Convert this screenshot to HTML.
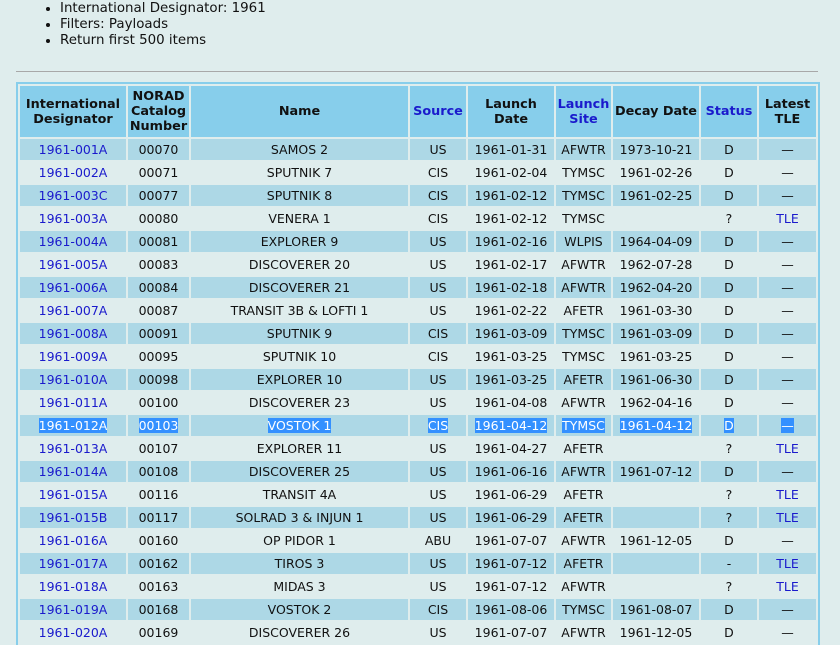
<!DOCTYPE html>
<html><head><style>
body{margin:0;background:#dfeded;font-family:"DejaVu Sans",Verdana,sans-serif;font-size:13px;color:#111;width:840px;height:625px;overflow:hidden;position:relative}
ul{position:absolute;left:0;top:1px;margin:0;padding:0 0 0 60px;line-height:16px;font-size:13.4px}
ul li{margin:0}
hr{position:absolute;left:16px;top:71px;width:802px;margin:0;border:0;border-top:1px solid #a8a8a8;height:0}
table{position:absolute;left:16px;top:82px;border:2px solid #87ceeb;border-bottom:0;border-spacing:2px;border-collapse:separate;table-layout:fixed;width:800px}
td,th{text-align:center;padding:0;height:21px;font-size:12.5px;white-space:nowrap;overflow:hidden}
th{background:#87ceeb;font-weight:bold;height:51px;line-height:15px;font-size:12.8px}
tr.o td{background:#add8e6}
tr.e td{background:#dfeded}
a,.l{color:#1a1acc;text-decoration:none}
.s{background:#3390ff;color:#fff}
</style></head><body>
<ul><li>International Designator: 1961</li><li>Filters: Payloads</li><li>Return first 500 items</li></ul>
<hr>
<table>
<colgroup><col style="width:106px"><col style="width:61px"><col style="width:217px"><col style="width:56px"><col style="width:86px"><col style="width:55px"><col style="width:86px"><col style="width:56px"><col style="width:57px"></colgroup>
<tr><th>International<br>Designator</th><th>NORAD<br>Catalog<br>Number</th><th>Name</th><th class="l">Source</th><th>Launch<br>Date</th><th class="l">Launch<br>Site</th><th>Decay Date</th><th class="l">Status</th><th>Latest<br>TLE</th></tr>
<tr class="o"><td><a>1961-001A</a></td><td>00070</td><td>SAMOS 2</td><td>US</td><td>1961-01-31</td><td>AFWTR</td><td>1973-10-21</td><td>D</td><td>—</td></tr>
<tr class="e"><td><a>1961-002A</a></td><td>00071</td><td>SPUTNIK 7</td><td>CIS</td><td>1961-02-04</td><td>TYMSC</td><td>1961-02-26</td><td>D</td><td>—</td></tr>
<tr class="o"><td><a>1961-003C</a></td><td>00077</td><td>SPUTNIK 8</td><td>CIS</td><td>1961-02-12</td><td>TYMSC</td><td>1961-02-25</td><td>D</td><td>—</td></tr>
<tr class="e"><td><a>1961-003A</a></td><td>00080</td><td>VENERA 1</td><td>CIS</td><td>1961-02-12</td><td>TYMSC</td><td></td><td>?</td><td><a>TLE</a></td></tr>
<tr class="o"><td><a>1961-004A</a></td><td>00081</td><td>EXPLORER 9</td><td>US</td><td>1961-02-16</td><td>WLPIS</td><td>1964-04-09</td><td>D</td><td>—</td></tr>
<tr class="e"><td><a>1961-005A</a></td><td>00083</td><td>DISCOVERER 20</td><td>US</td><td>1961-02-17</td><td>AFWTR</td><td>1962-07-28</td><td>D</td><td>—</td></tr>
<tr class="o"><td><a>1961-006A</a></td><td>00084</td><td>DISCOVERER 21</td><td>US</td><td>1961-02-18</td><td>AFWTR</td><td>1962-04-20</td><td>D</td><td>—</td></tr>
<tr class="e"><td><a>1961-007A</a></td><td>00087</td><td>TRANSIT 3B &amp; LOFTI 1</td><td>US</td><td>1961-02-22</td><td>AFETR</td><td>1961-03-30</td><td>D</td><td>—</td></tr>
<tr class="o"><td><a>1961-008A</a></td><td>00091</td><td>SPUTNIK 9</td><td>CIS</td><td>1961-03-09</td><td>TYMSC</td><td>1961-03-09</td><td>D</td><td>—</td></tr>
<tr class="e"><td><a>1961-009A</a></td><td>00095</td><td>SPUTNIK 10</td><td>CIS</td><td>1961-03-25</td><td>TYMSC</td><td>1961-03-25</td><td>D</td><td>—</td></tr>
<tr class="o"><td><a>1961-010A</a></td><td>00098</td><td>EXPLORER 10</td><td>US</td><td>1961-03-25</td><td>AFETR</td><td>1961-06-30</td><td>D</td><td>—</td></tr>
<tr class="e"><td><a>1961-011A</a></td><td>00100</td><td>DISCOVERER 23</td><td>US</td><td>1961-04-08</td><td>AFWTR</td><td>1962-04-16</td><td>D</td><td>—</td></tr>
<tr class="o"><td><span class="s">1961-012A</span></td><td><span class="s">00103</span></td><td><span class="s">VOSTOK 1</span></td><td><span class="s">CIS</span></td><td><span class="s">1961-04-12</span></td><td><span class="s">TYMSC</span></td><td><span class="s">1961-04-12</span></td><td><span class="s">D</span></td><td><span class="s">—</span></td></tr>
<tr class="e"><td><a>1961-013A</a></td><td>00107</td><td>EXPLORER 11</td><td>US</td><td>1961-04-27</td><td>AFETR</td><td></td><td>?</td><td><a>TLE</a></td></tr>
<tr class="o"><td><a>1961-014A</a></td><td>00108</td><td>DISCOVERER 25</td><td>US</td><td>1961-06-16</td><td>AFWTR</td><td>1961-07-12</td><td>D</td><td>—</td></tr>
<tr class="e"><td><a>1961-015A</a></td><td>00116</td><td>TRANSIT 4A</td><td>US</td><td>1961-06-29</td><td>AFETR</td><td></td><td>?</td><td><a>TLE</a></td></tr>
<tr class="o"><td><a>1961-015B</a></td><td>00117</td><td>SOLRAD 3 &amp; INJUN 1</td><td>US</td><td>1961-06-29</td><td>AFETR</td><td></td><td>?</td><td><a>TLE</a></td></tr>
<tr class="e"><td><a>1961-016A</a></td><td>00160</td><td>OP PIDOR 1</td><td>ABU</td><td>1961-07-07</td><td>AFWTR</td><td>1961-12-05</td><td>D</td><td>—</td></tr>
<tr class="o"><td><a>1961-017A</a></td><td>00162</td><td>TIROS 3</td><td>US</td><td>1961-07-12</td><td>AFETR</td><td></td><td>-</td><td><a>TLE</a></td></tr>
<tr class="e"><td><a>1961-018A</a></td><td>00163</td><td>MIDAS 3</td><td>US</td><td>1961-07-12</td><td>AFWTR</td><td></td><td>?</td><td><a>TLE</a></td></tr>
<tr class="o"><td><a>1961-019A</a></td><td>00168</td><td>VOSTOK 2</td><td>CIS</td><td>1961-08-06</td><td>TYMSC</td><td>1961-08-07</td><td>D</td><td>—</td></tr>
<tr class="e"><td><a>1961-020A</a></td><td>00169</td><td>DISCOVERER 26</td><td>US</td><td>1961-07-07</td><td>AFWTR</td><td>1961-12-05</td><td>D</td><td>—</td></tr>
</table>
</body></html>
